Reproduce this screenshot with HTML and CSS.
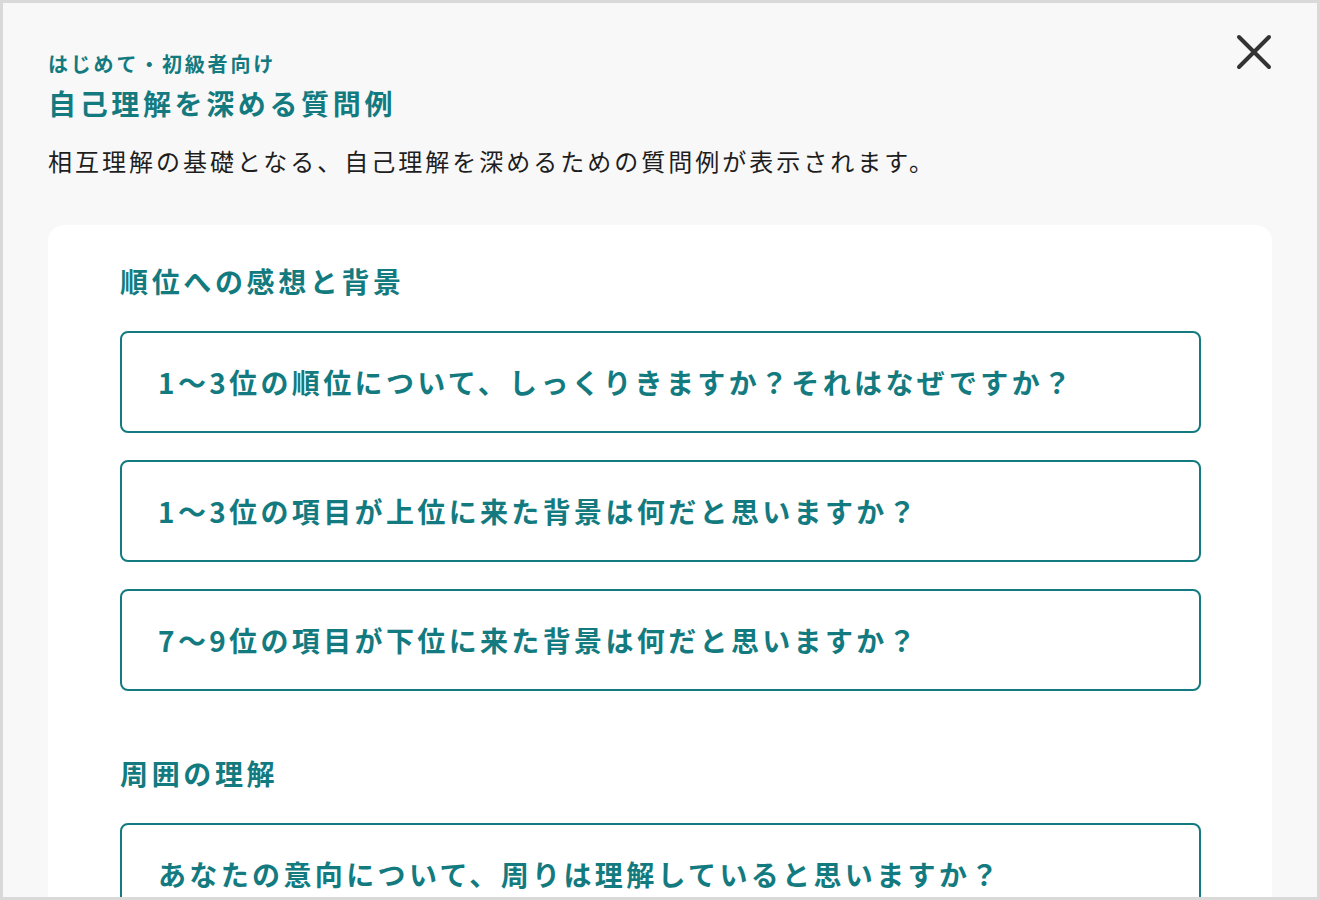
FILE: index.html
```html
<!DOCTYPE html>
<html lang="ja">
<head>
    <meta charset="UTF-8">
    <meta name="viewport" content="width=device-width, initial-scale=1.0">
    <title>自己理解を深める質問例</title>
    <link rel="stylesheet" href="styles.css">
</head>
<body>
    <div class="modal">
        <!--close-->
        <button class="close-btn" aria-label="閉じる">
            <svg width="36" height="36" viewBox="0 0 36 36">
                <path d="M3 3 L33 33 M33 3 L3 33" stroke="#333" stroke-width="4" stroke-linecap="round" fill="none"/>
            </svg>
        </button>

        <!--header-->
        <div class="modal-header">
            <p class="level">はじめて・初級者向け</p>
            <h1 class="title">自己理解を深める質問例</h1>
            <p class="lead">相互理解の基礎となる、自己理解を深めるための質問例が表示されます。</p>
        </div>

        <!--questions-->
        <div class="card">
            <section class="group">
                <h2>順位への感想と背景</h2>
                <div class="question">1〜3位の順位について、しっくりきますか？それはなぜですか？</div>
                <div class="question">1〜3位の項目が上位に来た背景は何だと思いますか？</div>
                <div class="question">7〜9位の項目が下位に来た背景は何だと思いますか？</div>
            </section>

            <section class="group">
                <h2>周囲の理解</h2>
                <div class="question">あなたの意向について、周りは理解していると思いますか？</div>
            </section>
        </div>
    </div>
</body>
</html>
```

FILE: styles.css
```css
* {
    box-sizing: border-box;
}
body {
    margin: 0;
    font-family: "Noto Sans CJK JP", "Noto Sans", sans-serif;
}
.modal {
    position: relative;
    height: 900px;
    overflow: hidden;
    border: 3px solid #d9d9d9;
    background-color: #f8f8f8;
    padding: 46px 45px 0 45px;
}
.close-btn {
    position: absolute;
    top: 31px;
    right: 45px;
    width: 36px;
    height: 36px;
    padding: 0;
    border: none;
    background: none;
    cursor: pointer;
}
.close-btn svg {
    display: block;
}
.level {
    margin: 0;
    font-size: 20px;
    line-height: 30px;
    font-weight: 700;
    letter-spacing: 0.14em;
    color: #137b80;
}
.title {
    margin: 4px 0 0;
    font-size: 28px;
    line-height: 40px;
    font-weight: 700;
    letter-spacing: 0.13em;
    color: #137b80;
}
.lead {
    margin: 20px 0 0;
    font-size: 24px;
    line-height: 36px;
    letter-spacing: 0.125em;
    color: #1e1e1e;
}
.card {
    margin-top: 46px;
    background-color: #fff;
    border-radius: 16px;
    padding: 34px 71px 40px 72px;
}
.group + .group {
    margin-top: 60px;
}
.group h2 {
    margin: 0 0 28px;
    font-size: 28px;
    line-height: 44px;
    font-weight: 700;
    letter-spacing: 0.13em;
    color: #137b80;
}
.question {
    display: flex;
    align-items: center;
    height: 102px;
    padding: 0 36px;
    border: 2px solid #137b80;
    border-radius: 8px;
    font-size: 28px;
    font-weight: 700;
    letter-spacing: 0.12em;
    color: #137b80;
}
.question + .question {
    margin-top: 27px;
}
```
